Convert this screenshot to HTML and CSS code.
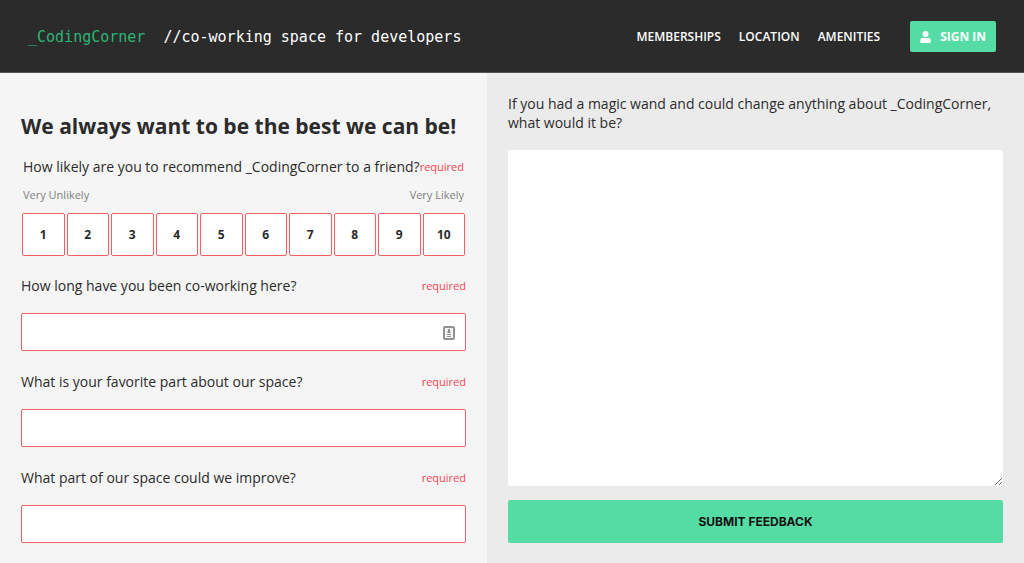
FILE: index.html
```
<!DOCTYPE html>
<html lang="en">
<head>
  <meta charset="UTF-8" />
  <meta name="viewport" content="width=device-width, initial-scale=1" />
  <title>Feedback | _CodingCorner</title>
  <link rel="stylesheet" href="styles.css">
</head>
<body>
  <header>
    <div class="brand">
      <a href="#" class="logo">_CodingCorner</a>
      <span class="tagline">//co-working space for developers</span>
    </div>
    <nav>
      <a href="#">Memberships</a>
      <a href="#">Location</a>
      <a href="#">Amenities</a>
      <button type="button" class="sign-in">
        <svg viewBox="0 0 448 512" aria-hidden="true"><path d="M224 256a128 128 0 1 0 0-256 128 128 0 0 0 0 256zm90 32h-17a174 174 0 0 1-146 0h-17A134 134 0 0 0 0 422v42a48 48 0 0 0 48 48h352a48 48 0 0 0 48-48v-42a134 134 0 0 0-134-134z"/></svg>
        Sign In
      </button>
    </nav>
  </header>

  <form id="feedback-form">
    <section class="questions">
      <h1>We always want to be the best we can be!</h1>

      <fieldset>
        <legend><span>How likely are you to recommend _CodingCorner to a friend?</span><span class="required">required</span></legend>
        <div class="scale">
          <span>Very Unlikely</span>
          <span>Very Likely</span>
        </div>
        <div class="ratings">
          <input type="radio" name="rating" id="r1" value="1" required><label for="r1">1</label>
          <input type="radio" name="rating" id="r2" value="2"><label for="r2">2</label>
          <input type="radio" name="rating" id="r3" value="3"><label for="r3">3</label>
          <input type="radio" name="rating" id="r4" value="4"><label for="r4">4</label>
          <input type="radio" name="rating" id="r5" value="5"><label for="r5">5</label>
          <input type="radio" name="rating" id="r6" value="6"><label for="r6">6</label>
          <input type="radio" name="rating" id="r7" value="7"><label for="r7">7</label>
          <input type="radio" name="rating" id="r8" value="8"><label for="r8">8</label>
          <input type="radio" name="rating" id="r9" value="9"><label for="r9">9</label>
          <input type="radio" name="rating" id="r10" value="10"><label for="r10">10</label>
        </div>
      </fieldset>

      <div class="field">
        <label for="how-long">How long have you been co-working here? <span class="required">required</span></label>
        <div class="input-wrap">
          <input type="text" id="how-long" name="how-long" required>
          <svg class="autofill" viewBox="0 0 12 14" aria-hidden="true"><rect x="1" y="1" width="10" height="12" rx="1" fill="#f4f4f4" stroke="#929292" stroke-width="2"/><path d="M5 3h2v2l1 2H4l1-2zM4 8h4v1H4zM4 10h4v1H4z" fill="#8c8c8c"/></svg>
        </div>
      </div>

      <div class="field">
        <label for="favorite">What is your favorite part about our space? <span class="required">required</span></label>
        <input type="text" id="favorite" name="favorite" required>
      </div>

      <div class="field">
        <label for="improve">What part of our space could we improve? <span class="required">required</span></label>
        <input type="text" id="improve" name="improve" required>
      </div>
    </section>

    <section class="wish">
      <label for="magic-wand">If you had a magic wand and could change anything about _CodingCorner, what would it be?</label>
      <textarea id="magic-wand" name="magic-wand"></textarea>
      <button type="submit">Submit Feedback</button>
    </section>
  </form>
</body>
</html>
```
FILE: styles.css
```
* { box-sizing: border-box; }

body {
  font-family: "Open Sans", sans-serif;
  font-size: 14px;
  line-height: 20px;
  color: #2b2b2b;
  margin: 0;
  min-height: 100vh;
  display: flex;
  flex-direction: column;
}

header {
  background: #2b2b2b;
  padding: 21px 28px 20px;
  display: flex;
  align-items: center;
  justify-content: space-between;
  border-bottom: 1px solid #555;
}

.brand {
  font-family: "DejaVu Sans Mono", monospace;
  font-size: 15px;
  display: flex;
  gap: 18px;
  color: #fff;
}

.logo {
  color: #2bb673;
  text-decoration: none;
}

nav {
  display: flex;
  align-items: center;
  gap: 18px;
}

nav a {
  color: #fff;
  font-size: 12px;
  font-weight: 600;
  line-height: 22px;
  padding-top: 1px;
  text-transform: uppercase;
  text-decoration: none;
}

button {
  font-family: inherit;
  font-size: 12px;
  font-weight: bold;
  text-transform: uppercase;
  background: #55dca4;
  border: none;
  border-radius: 2px;
  cursor: pointer;
}

.sign-in {
  display: flex;
  align-items: center;
  gap: 9px;
  height: 31px;
  padding: 0 10px;
  margin-left: 12px;
  color: #fff;
}

.sign-in svg {
  width: 11px;
  height: 12px;
  fill: #fff;
}

form {
  flex: 1;
  display: grid;
  grid-template-columns: 487fr 537fr;
}

.questions {
  background: #f5f5f5;
  padding: 37px 21px 20px;
}

h1 {
  font-size: 21px;
  line-height: 32px;
  margin: 0 0 15px;
}

fieldset {
  border: none;
  margin: 0 0 20px;
  padding: 0 1px;
}

legend {
  width: 100%;
  padding: 0 1px;
  display: flex;
  justify-content: space-between;
  white-space: nowrap;
}

.required {
  color: #f4444e;
  font-size: 11px;
}

.scale {
  display: flex;
  justify-content: space-between;
  padding: 8px 1px;
  font-size: 11px;
  color: #808080;
}

.ratings {
  display: flex;
  gap: 2px;
}

.ratings input {
  position: absolute;
  opacity: 0;
}

.ratings label {
  flex: 1;
  height: 43px;
  line-height: 42px;
  text-align: center;
  font-size: 12px;
  font-weight: bold;
  background: #fff;
  border: 1px solid #f26065;
  border-radius: 2px;
  cursor: pointer;
}

.ratings input:checked + label {
  background: #55dca4;
}

.field {
  margin-bottom: 21px;
}

.field:last-child {
  margin-bottom: 0;
}

.field label {
  display: flex;
  justify-content: space-between;
  margin-bottom: 17px;
}

.field input {
  display: block;
  width: 100%;
  height: 38px;
  padding: 0 10px;
  font: inherit;
  border: 1px solid #f26065;
  border-radius: 2px;
}

.input-wrap {
  position: relative;
}

.autofill {
  position: absolute;
  top: 13px;
  right: 11px;
  width: 12px;
  height: 14px;
}

.wish {
  background: #ebebeb;
  padding: 21px 21px 20px;
  display: flex;
  flex-direction: column;
}

.wish label {
  line-height: 19px;
  margin-bottom: 18px;
}

textarea {
  flex: 1;
  padding: 10px;
  font: inherit;
  border: none;
  border-radius: 2px;
  margin-bottom: 14px;
}

.wish button {
  height: 43px;
  font-family: Inter, sans-serif;
  color: #111;
}
```
